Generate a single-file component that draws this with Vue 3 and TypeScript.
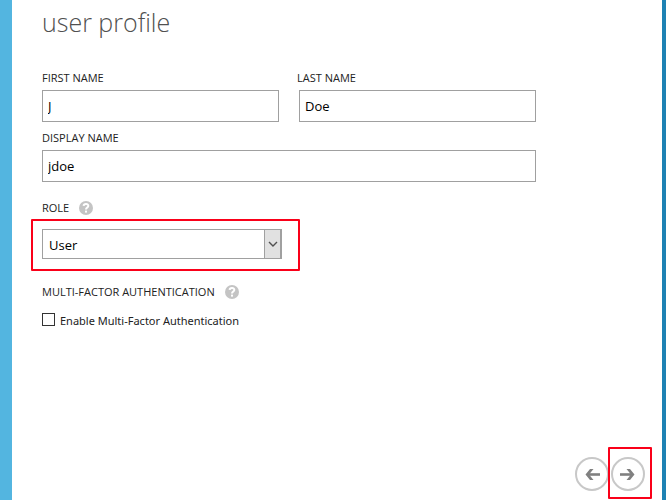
<script setup lang="ts">
import { ref } from 'vue'

const firstName = ref('J')
const lastName = ref('Doe')
const displayName = ref('jdoe')
const role = ref('User')
const mfaEnabled = ref(false)
</script>

<template>
  <main class="panel">
    <form class="profile" @submit.prevent>
      <h1>user profile</h1>

      <div class="names">
        <div class="field">
          <label for="first-name">FIRST NAME</label>
          <input id="first-name" v-model="firstName" type="text" />
        </div>
        <div class="field">
          <label for="last-name" class="outdent">LAST NAME</label>
          <input id="last-name" v-model="lastName" type="text" />
        </div>
      </div>

      <div class="field">
        <label for="display-name">DISPLAY NAME</label>
        <input id="display-name" v-model="displayName" type="text" />
      </div>

      <div class="role">
        <div class="caption">
          <label for="role">ROLE</label>
          <svg class="help" viewBox="0 0 14 14" aria-hidden="true">
            <circle cx="7" cy="7" r="7" fill="#c4c4c4" />
            <path d="M4.6 4.9C4.8 2.2 9.5 2.4 9.3 5C9.2 6.6 7 6.6 7 8.6" fill="none" stroke="#fff" stroke-width="2" />
            <rect x="6" y="9.6" width="2" height="2" fill="#fff" />
          </svg>
        </div>
        <div class="picker marked">
          <select id="role" v-model="role">
            <option>User</option>
          </select>
          <span class="drop">
            <svg viewBox="0 0 10 6" aria-hidden="true">
              <path d="M1 1L5 5L9 1" fill="none" stroke="#505050" stroke-width="1.4" />
            </svg>
          </span>
        </div>
      </div>

      <div class="mfa">
        <div class="caption">
          <span>MULTI-FACTOR AUTHENTICATION</span>
          <svg class="help" viewBox="0 0 14 14" aria-hidden="true">
            <circle cx="7" cy="7" r="7" fill="#c4c4c4" />
            <path d="M4.6 4.9C4.8 2.2 9.5 2.4 9.3 5C9.2 6.6 7 6.6 7 8.6" fill="none" stroke="#fff" stroke-width="2" />
            <rect x="6" y="9.6" width="2" height="2" fill="#fff" />
          </svg>
        </div>
        <label class="check" for="mfa">
          <input id="mfa" v-model="mfaEnabled" type="checkbox" />
          <span>Enable Multi-Factor Authentication</span>
        </label>
      </div>
    </form>

    <nav class="steps">
      <button type="button" aria-label="Back">
        <svg viewBox="0 0 34 34" aria-hidden="true">
          <circle cx="17" cy="17" r="16" fill="#fff" stroke="#c8c8c8" stroke-width="2" />
          <path d="M25 17.5H12" fill="none" stroke="#808080" stroke-width="2.6" />
          <path d="M15 12H18.5L14 17.5L18.5 23H15L10.5 17.5Z" fill="#808080" />
        </svg>
      </button>
      <button type="button" class="marked" aria-label="Next">
        <svg viewBox="0 0 34 34" aria-hidden="true">
          <circle cx="17" cy="17" r="16" fill="#fff" stroke="#c8c8c8" stroke-width="2" />
          <path d="M9 17.5H22" fill="none" stroke="#808080" stroke-width="2.6" />
          <path d="M19 12H15.5L20 17.5L15.5 23H19L23.5 17.5Z" fill="#808080" />
        </svg>
      </button>
    </nav>
  </main>
</template>

<style>
body {
  margin: 0;
  background: #fff;
}
</style>

<style scoped>
.panel {
  box-sizing: border-box;
  min-height: 100vh;
  display: flex;
  flex-direction: column;
  justify-content: space-between;
  border-left: 12px solid #53b5e0;
  border-right: 4px solid #1e82b4;
  background: #fff;
  color: #222;
  font: 11px/16px "Open Sans", "Noto Sans", sans-serif;
}

.profile {
  display: flex;
  flex-direction: column;
  gap: 8px;
  padding: 4px 126px 0 30px;
}

h1 {
  margin: 0 0 22px;
  color: #505050;
  font-size: 25px;
  font-weight: 300;
  line-height: 36px;
}

.names {
  display: grid;
  grid-template-columns: 1fr 1fr;
  gap: 20px;
}

.field {
  display: flex;
  flex-direction: column;
  gap: 4px;
}

.outdent {
  margin-left: -2px;
}

input[type="text"],
select {
  box-sizing: border-box;
  width: 100%;
  height: 32px;
  margin: 0;
  padding: 0 5px;
  border: 1px solid #a0a0a0;
  border-radius: 0;
  background: #fff;
  color: #000;
  font: 13px/18px "Open Sans", "Noto Sans", sans-serif;
}

.role {
  margin-top: 10px;
}

.caption {
  display: flex;
  align-items: center;
  gap: 10px;
}

.help {
  width: 14px;
  height: 14px;
}

.picker {
  width: 240px;
  margin-top: 13px;
}

.marked {
  position: relative;
}

.marked::after {
  content: "";
  position: absolute;
  inset: -10px -18px -12px -11px;
  border: 2px solid #fa0019;
  border-radius: 1px;
  pointer-events: none;
}

select {
  display: block;
  height: 30px;
  padding: 2px 24px 0 6px;
  appearance: none;
}

.drop {
  position: absolute;
  inset: 0 0 0 auto;
  box-sizing: border-box;
  width: 18px;
  display: grid;
  place-items: center;
  border: 1px solid #a0a0a0;
  border-right-width: 2px;
  background: #e1e1e1;
  pointer-events: none;
}

.drop svg {
  width: 10px;
  height: 6px;
}

.mfa {
  margin-top: 17px;
}

.check {
  display: flex;
  align-items: flex-start;
  gap: 5px;
  width: fit-content;
  margin-top: 13px;
  font-family: "Noto Sans", "Open Sans", sans-serif;
}

.check input {
  box-sizing: border-box;
  width: 13px;
  height: 13px;
  margin: 0;
  border: 1px solid #333;
  background: #fff;
  appearance: none;
}

.check input:checked {
  background: #333;
}

.steps {
  display: flex;
  justify-content: flex-end;
  gap: 2px;
  padding: 0 17px 9px;
}

.steps button {
  width: 34px;
  height: 34px;
  padding: 0;
  border: 0;
  background: none;
}

.steps svg {
  display: block;
  width: 34px;
  height: 34px;
}

.steps .marked::after {
  inset: -10px -7px -8px -3px;
}
</style>
